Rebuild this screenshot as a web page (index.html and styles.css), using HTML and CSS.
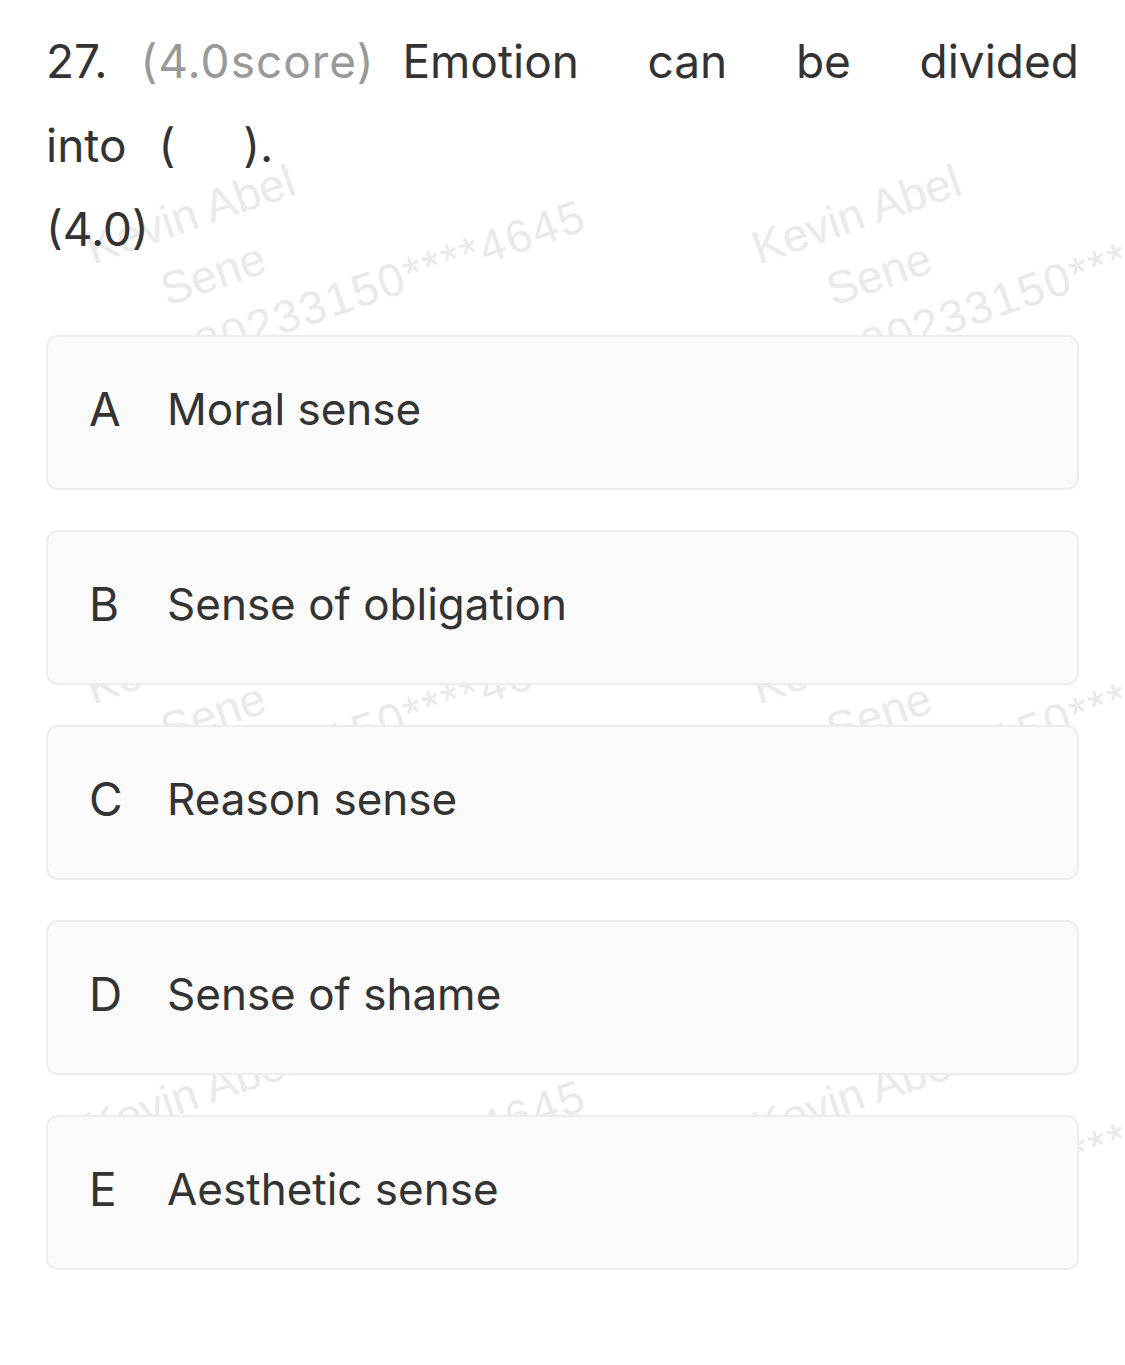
FILE: index.html
```html
<!DOCTYPE html>
<html lang="en">
<head>
<meta charset="utf-8">
<title>Question 27</title>
<link rel="stylesheet" href="styles.css">
</head>
<body>
<div class="page">
  <div class="wm-layer" aria-hidden="true">
    <div class="wm"><div class="l1">Kevin Abel</div><div class="l2">Sene</div><div class="l3">20233150****4645</div></div>
    <div class="wm"><div class="l1">Kevin Abel</div><div class="l2">Sene</div><div class="l3">20233150****4645</div></div>
    <div class="wm"><div class="l1">Kevin Abel</div><div class="l2">Sene</div><div class="l3">20233150****4645</div></div>
    <div class="wm"><div class="l1">Kevin Abel</div><div class="l2">Sene</div><div class="l3">20233150****4645</div></div>
    <div class="wm"><div class="l1">Kevin Abel</div><div class="l2">Sene</div><div class="l3">20233150****4645</div></div>
    <div class="wm"><div class="l1">Kevin Abel</div><div class="l2">Sene</div><div class="l3">20233150****4645</div></div>
  </div>

  <div class="content">
    <div class="title"><span class="num">27.</span><span class="score">(4.0score)</span>Emotion can be divided <span class="nobr">into<span class="po">(</span><span class="pc">)</span>.</span></div>
    <div class="total">(4.0)</div>

    <div class="options">
      <div class="option"><span class="letter">A</span><span class="text">Moral sense</span></div>
      <div class="option"><span class="letter">B</span><span class="text">Sense of obligation</span></div>
      <div class="option"><span class="letter">C</span><span class="text">Reason sense</span></div>
      <div class="option"><span class="letter">D</span><span class="text">Sense of shame</span></div>
      <div class="option"><span class="letter">E</span><span class="text">Aesthetic sense</span></div>
    </div>
  </div>
</div>
</body>
</html>
```

FILE: styles.css
```css
* { box-sizing: border-box; }

html, body {
  margin: 0;
  padding: 0;
  background: #ffffff;
}

body {
  font-family: Inter, "Noto Sans", "Liberation Sans", sans-serif;
  color: #333333;
}

.page {
  position: relative;
  width: 1125px;
  min-height: 1365px;
  overflow: hidden;
}

/* watermark layer */
.wm-layer {
  position: absolute;
  left: 0;
  top: 0;
  width: 1125px;
  height: 1365px;
  z-index: 0;
  display: grid;
  grid-template-columns: repeat(2, 666px);
  grid-auto-rows: 440px;
  padding: 219px 0 0 77px;
  overflow: hidden;
  pointer-events: none;
}

.wm {
  transform: rotate(-19deg);
  transform-origin: 0 0;
  font-family: "Liberation Sans", Arial, sans-serif;
  font-size: 46px;
  line-height: 64px;
  color: #eaeaea;
  white-space: nowrap;
}

.wm .l2 { padding-left: 57px; }
.wm .l3 { padding-left: 71px; letter-spacing: 2px; }

/* content */
.content {
  position: relative;
  z-index: 1;
  padding: 19px 46px 0 46px;
}

.title {
  font-size: 46px;
  line-height: 84px;
  text-align: justify;
}

.num { display: inline-block; }

.score {
  display: inline-block;
  color: #999999;
  letter-spacing: 1px;
  margin-left: 33px;
  margin-right: 28px;
}

.nobr { white-space: nowrap; }

.po {
  display: inline-block;
  margin-left: 32px;
}

.pc {
  display: inline-block;
  margin-left: 68px;
}

.total {
  font-size: 46px;
  line-height: 84px;
}

.options {
  display: flex;
  flex-direction: column;
  gap: 40px;
  margin-top: 64px;
}

.option {
  display: flex;
  align-items: center;
  height: 155px;
  padding-left: 41px;
  padding-bottom: 8px;
  background: #fafafa;
  border: 2px solid #ededed;
  border-radius: 12px;
  font-size: 44px;
}

.letter {
  width: 78px;
  flex: none;
  font-size: 46px;
}
```
